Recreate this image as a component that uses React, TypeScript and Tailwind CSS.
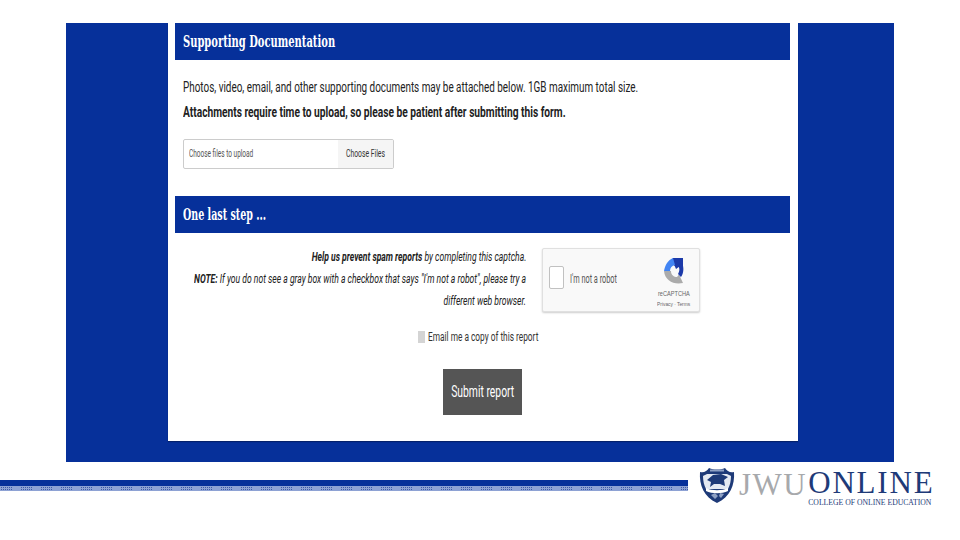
const Logo = () => (
  <svg width="36" height="38" viewBox="0 0 36 38" className="shrink-0">
    <path d="M1 6 C5 7 8 5 10 2 C15 4 21 4 26 2 C28 5 31 7 35 6 C36 19 31 31 18 37 C5 31 0 19 1 6Z" fill="#1e3a78" />
    <path d="M4 10 C5 9 7 9 8 8 L28 8 C29 9 31 9 32 10 C32 15 31 19 29 23 L7 23 C5 19 4 15 4 10Z" fill="#e4e9f2" />
    <path d="M8 14 L14 9 L22 8 L29 11 L25 14 L26 20 L21 18 L15 18 L11 21 L12 16Z" fill="#1e3a78" />
    <path d="M7 22 C13 25 23 25 29 22 L29 25 C23 28 13 28 7 25Z" fill="#ffffff" />
    <path d="M12 29 L16 27 L19 30 L16 33Z M21 27 L25 28 L22 32 L20 30Z" fill="#8fa1c4" />
    <path d="M11 3.500 L25 3.500 L25 5.500 L11 5.500Z" fill="#8fa1c4" />
  </svg>
);

const RecaptchaIcon = () => (
  <svg width="20" height="26" viewBox="0 0 20 26">
    <path d="M9 0 L19 0 L19 11 L15.500 8.500 L12 11 C11 8 10 6 6 6Z" fill="#1c3aa9" />
    <path d="M9 0 C4 2 1 7 0 13 L6 13 C6 10 8 7.500 11 7 L9 0Z" fill="#4285f4" />
    <path d="M0 13 L7 13 C7 17 10 19 13 19 L15 16.500 L19 25 C10 27 1 23 0 13Z" fill="#ababab" />
    <path d="M13 7 C16 9 16 13 14 16 L17 19 C20 15 20 9 18 5Z" fill="#1c3aa9" />
  </svg>
);

export default function App() {
  return (
    <div className="flex h-[540px] w-[960px] flex-col overflow-hidden bg-white font-['Liberation_Sans',sans-serif] text-[#222]">
      <div className="mx-[66px] mt-[23px] flex h-[439px] justify-center bg-[#06309a] pl-[6px]">
        <div className="h-[418px] w-[630px] bg-white pl-[7px] pr-[8px] shadow-[0_1px_1px_rgba(0,0,0,0.3)]">
          <div className="flex h-[37px] items-center bg-[#06309a] px-[8px]">
            <span className="origin-left scale-x-[0.585] whitespace-nowrap font-['DejaVu_Serif',serif] text-[17px] font-bold text-white">Supporting Documentation</span>
          </div>
          <div className="px-[8px] pt-[18px]">
            <p className="origin-left scale-x-[0.66] whitespace-nowrap font-['Roboto',sans-serif] text-[15px] leading-[18px]">Photos, video, email, and other supporting documents may be attached below. 1GB maximum total size.</p>
            <p className="mt-[7px] origin-left scale-x-[0.68] whitespace-nowrap font-['Roboto',sans-serif] text-[15px] font-bold leading-[18px]">Attachments require time to upload, so please be patient after submitting this form.</p>
            <div className="mt-[18px] flex h-[30px] w-[211px] overflow-hidden rounded-[2px] border border-[#cccccc]">
              <div className="flex flex-1 items-center pl-[5px]">
                <span className="origin-left scale-x-[0.59] whitespace-nowrap font-['Roboto',sans-serif] text-[11px] text-[#555]">Choose files to upload</span>
              </div>
              <div className="flex w-[55px] items-center justify-center bg-[#f5f5f5]">
                <span className="scale-x-[0.62] whitespace-nowrap font-['Roboto',sans-serif] text-[11px] text-[#333]">Choose Files</span>
              </div>
            </div>
          </div>
          <div className="mt-[27px] flex h-[37px] items-center bg-[#06309a] px-[8px]">
            <span className="origin-left scale-x-[0.56] whitespace-nowrap font-['DejaVu_Serif',serif] text-[17px] font-bold text-white">One last step ...</span>
          </div>
          <div className="mt-[15px] flex">
            <div className="mt-[-2px] flex w-[351px] flex-col items-end font-['Roboto',sans-serif] text-[13px] italic leading-[22px]">
              <p className="origin-right scale-x-[0.66] whitespace-nowrap"><b>Help us prevent spam reports</b> by completing this captcha.</p>
              <p className="origin-right scale-x-[0.66] whitespace-nowrap"><b>NOTE:</b> If you do not see a gray box with a checkbox that says "I'm not a robot", please try a</p>
              <p className="origin-right scale-x-[0.66] whitespace-nowrap">different web browser.</p>
            </div>
            <div className="ml-[16px] flex h-[64px] w-[158px] items-start rounded-[2px] border border-[#e0e0e0] bg-[#f9f9f9] pl-[6px] pr-[8px] shadow-[0_1px_2px_rgba(0,0,0,0.2)]">
              <div className="mt-[17px] h-[23px] w-[15px] shrink-0 rounded-[2px] border border-[#c1c1c1] bg-white" />
              <span className="ml-[6px] mt-[21px] origin-left scale-x-[0.61] whitespace-nowrap font-['Roboto',sans-serif] text-[12px] leading-[18px] text-[#555]">I'm not a robot</span>
              <div className="ml-auto mt-[9px] flex w-[34px] shrink-0 flex-col items-center">
                <RecaptchaIcon />
                <span className="mt-[4px] scale-x-[0.8] whitespace-nowrap text-[7px] leading-[11px] text-[#666]">reCAPTCHA</span>
                <span className="scale-x-[0.8] whitespace-nowrap text-[6px] leading-[11px] text-[#666]">Privacy · Terms</span>
              </div>
            </div>
          </div>
          <div className="mt-[16px] flex items-center pl-[243px]">
            <div className="h-[12px] w-[7px] bg-[#d4d4d4]" />
            <span className="ml-[3px] origin-left scale-x-[0.665] whitespace-nowrap font-['Roboto',sans-serif] text-[12.500px] text-[#333]">Email me a copy of this report</span>
          </div>
          <div className="mt-[22px] flex justify-center">
            <div className="flex h-[46px] w-[79px] items-center justify-center bg-[#555555]">
              <span className="scale-x-[0.61] whitespace-nowrap font-['Roboto',sans-serif] text-[17px] text-white">Submit report</span>
            </div>
          </div>
        </div>
      </div>
      <div className="relative mt-[3px] h-[75px]">
        <div className="mt-[15px] h-[6px] w-[688px] bg-[#06309a]" />
        <svg width="688" height="5" className="block">
          <defs>
            <pattern id="dots" width="20" height="5" patternUnits="userSpaceOnUse">
              <rect width="20" height="5" fill="#8ea2d4" />
              <path d="M1 1h1v1H1zM3 1h1v1H3zM5 1h1v1H5zM7 1h1v1H7zM9 1h1v1H9zM11 1h1v1h-1zM1 3h1v1H1zM3 3h1v1H3zM5 3h1v1H5zM7 3h1v1H7zM9 3h1v1H9zM11 3h1v1h-1z" fill="#3d5aa8" />
            </pattern>
          </defs>
          <rect width="688" height="5" fill="url(#dots)" />
        </svg>
        <div className="absolute left-[699px] top-[1px] flex items-start">
          <Logo />
          <span className="ml-[4px] mt-[2px] whitespace-nowrap font-['Liberation_Serif',serif] text-[31px] leading-[34px] tracking-[1.500px] text-[#a7a9ac]">JWU</span>
          <div className="ml-[1px] flex flex-col">
            <span className="mt-[2px] whitespace-nowrap font-['Liberation_Serif',serif] text-[31px] leading-[30px] tracking-[1.800px] text-[#1e3a78]">ONLINE</span>
            <span className="whitespace-nowrap font-['Liberation_Serif',serif] text-[7.700px] leading-[9px] text-[#1e3a78]">COLLEGE OF ONLINE EDUCATION</span>
          </div>
        </div>
      </div>
    </div>
  );
}
